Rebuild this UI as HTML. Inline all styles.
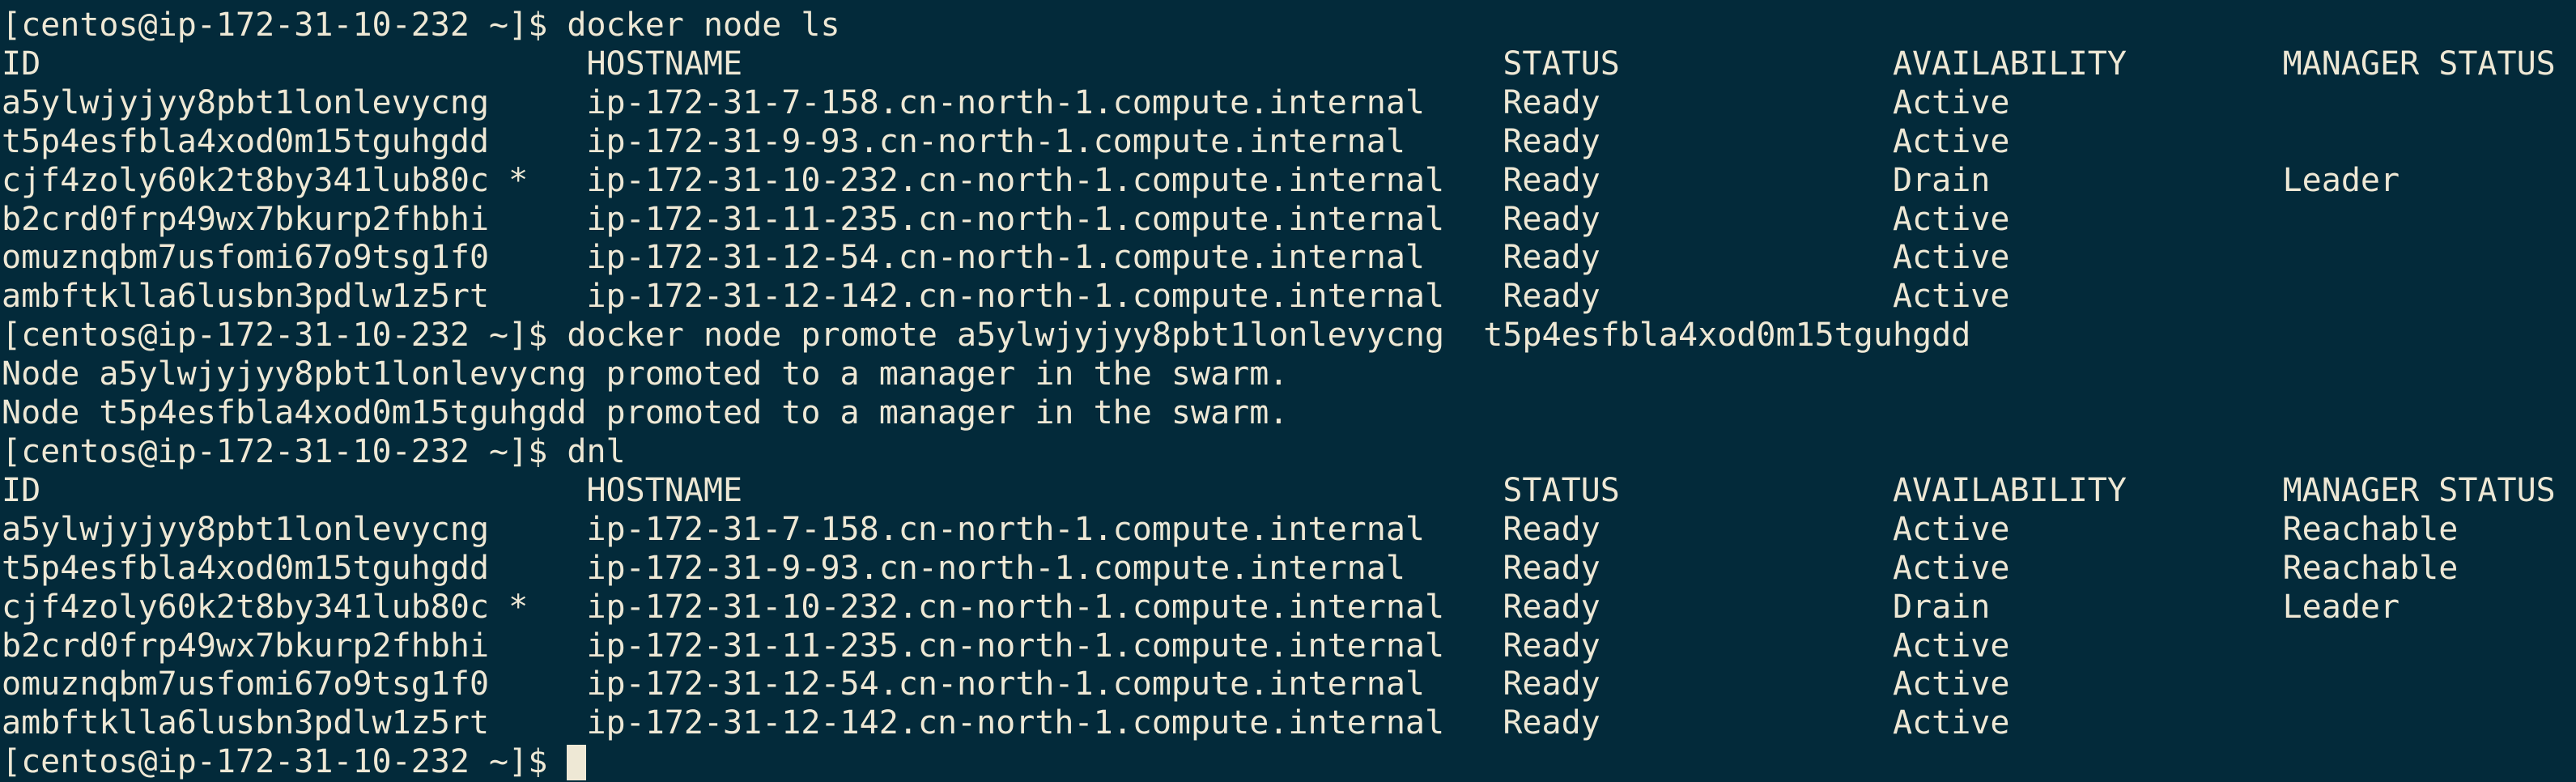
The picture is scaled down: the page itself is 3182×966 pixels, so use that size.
<!DOCTYPE html>
<html><head><meta charset="utf-8"><style>
html,body{margin:0;padding:0;background:#032a3a;}
body{width:3182px;height:956px;overflow:hidden;position:relative;}
pre{margin:0;position:absolute;left:2px;top:8px;font-family:"DejaVu Sans Mono","Liberation Mono",monospace;font-size:40px;line-height:47.9px;color:#eee8d5;}
.cur{display:inline-block;width:24px;height:44px;background:#eee8d5;vertical-align:-10px;}
</style></head><body><pre>[centos@ip-172-31-10-232 ~]$ docker node ls
ID                            HOSTNAME                                       STATUS              AVAILABILITY        MANAGER STATUS
a5ylwjyjyy8pbt1lonlevycng     ip-172-31-7-158.cn-north-1.compute.internal    Ready               Active
t5p4esfbla4xod0m15tguhgdd     ip-172-31-9-93.cn-north-1.compute.internal     Ready               Active
cjf4zoly60k2t8by341lub80c *   ip-172-31-10-232.cn-north-1.compute.internal   Ready               Drain               Leader
b2crd0frp49wx7bkurp2fhbhi     ip-172-31-11-235.cn-north-1.compute.internal   Ready               Active
omuznqbm7usfomi67o9tsg1f0     ip-172-31-12-54.cn-north-1.compute.internal    Ready               Active
ambftklla6lusbn3pdlw1z5rt     ip-172-31-12-142.cn-north-1.compute.internal   Ready               Active
[centos@ip-172-31-10-232 ~]$ docker node promote a5ylwjyjyy8pbt1lonlevycng  t5p4esfbla4xod0m15tguhgdd
Node a5ylwjyjyy8pbt1lonlevycng promoted to a manager in the swarm.
Node t5p4esfbla4xod0m15tguhgdd promoted to a manager in the swarm.
[centos@ip-172-31-10-232 ~]$ dnl
ID                            HOSTNAME                                       STATUS              AVAILABILITY        MANAGER STATUS
a5ylwjyjyy8pbt1lonlevycng     ip-172-31-7-158.cn-north-1.compute.internal    Ready               Active              Reachable
t5p4esfbla4xod0m15tguhgdd     ip-172-31-9-93.cn-north-1.compute.internal     Ready               Active              Reachable
cjf4zoly60k2t8by341lub80c *   ip-172-31-10-232.cn-north-1.compute.internal   Ready               Drain               Leader
b2crd0frp49wx7bkurp2fhbhi     ip-172-31-11-235.cn-north-1.compute.internal   Ready               Active
omuznqbm7usfomi67o9tsg1f0     ip-172-31-12-54.cn-north-1.compute.internal    Ready               Active
ambftklla6lusbn3pdlw1z5rt     ip-172-31-12-142.cn-north-1.compute.internal   Ready               Active
[centos@ip-172-31-10-232 ~]$ <span class="cur"></span></pre></body></html>
